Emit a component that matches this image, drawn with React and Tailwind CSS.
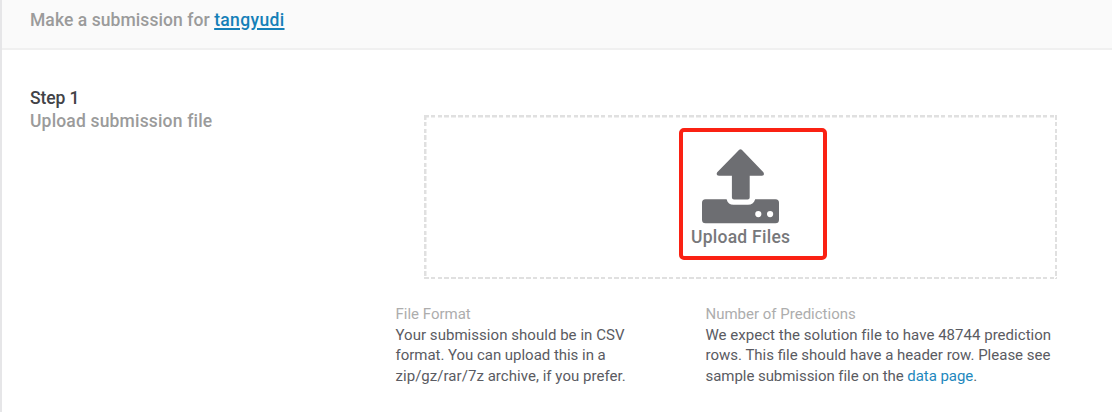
const dashedFrame =
  "bg-no-repeat bg-[image:repeating-linear-gradient(90deg,#e0e0e0_0_4.5px,transparent_4.5px_6.8px),repeating-linear-gradient(90deg,#e0e0e0_0_4.5px,transparent_4.5px_6.8px),repeating-linear-gradient(180deg,#e0e0e0_0_4.5px,transparent_4.5px_6.8px),repeating-linear-gradient(180deg,#e0e0e0_0_4.5px,transparent_4.5px_6.8px)] bg-[position:left_top,left_bottom,left_top,right_top] bg-[size:100%_2.5px,100%_2.5px,2.5px_100%,2.5px_100%]";

function UploadIcon() {
  return (
    <svg className="ml-[11px] block shrink-0" width="77" height="75" viewBox="0 0 77 75" fill="#6d6e72">
      <path d="M37.2 .8Q38.5 -.4 39.8 .8L61.4 23.3Q63 26.5 60 26.8H47.7V48.5Q47.7 50.6 45.6 50.6H32Q29.9 50.6 29.9 48.5V26.8H17Q13.5 26.5 15.2 23.3Z" />
      <path
        fillRule="evenodd"
        d="M3.5 50.2H24.6C25.5 53.8 28 55.8 31.5 55.8H46C49.5 55.8 52 53.8 53.2 50.2H73.5Q77 50.2 77 53.7V70.7Q77 74.2 73.5 74.2H3.5Q0 74.2 0 70.7V53.7Q0 50.2 3.5 50.2ZM56.3 62a3.1 3.1 0 1 0 0 6.2a3.1 3.1 0 1 0 0-6.2ZM68.1 62a3.1 3.1 0 1 0 0 6.2a3.1 3.1 0 1 0 0-6.2Z"
      />
    </svg>
  );
}

function Line({ className = "", children }) {
  return <span className={`block w-max ${className}`}>{children}</span>;
}

export default function App() {
  return (
    <div className="h-[412px] w-[1112px] overflow-hidden border-l-2 border-[#e6e6e8] bg-white font-['Roboto','Liberation_Sans',sans-serif]">
      <header className="h-[50px] border-b-2 border-[#f0f0f0] bg-[#fafafa] pl-7 pt-2 text-[17.5px] font-medium leading-[24px] text-[#9b9b9b]">
        <span className="tracking-[0.07px]">Make a submission for </span>
        <a href="#" className="tracking-[0.35px] text-[#1580b8] underline decoration-[1.5px] underline-offset-[1.5px]">tangyudi</a>
      </header>
      <main className="flex pl-7">
        <section className="w-[366px] shrink-0 pt-[37px] text-[17.5px] font-medium leading-[23px]">
          <Line className="tracking-[-0.1px] text-[#424347]">Step 1</Line>
          <Line className="tracking-[0.17px] text-[#9b9b9b]">Upload submission file</Line>
        </section>
        <section className="pt-[65px]">
          <div className={`ml-[28px] h-[164px] w-[633px] pl-[255px] pt-[13px] ${dashedFrame}`}>
            <button className="flex h-[132px] w-[148px] flex-col items-start justify-start rounded-[5px] border-4 border-[#fa2113] pl-2 pt-[17px] text-left">
              <UploadIcon />
              <Line className="mt-[1px] text-[17.5px] font-medium leading-[24px] tracking-[0.25px] text-[#77787b]">Upload Files</Line>
            </button>
          </div>
          <div className="-ml-[0.5px] flex pt-[25px] text-[15px] leading-[20.7px] text-[#5a5b62]">
            <div className="w-[310px]">
              <Line className="text-[#adadad]">File Format</Line>
              <Line className="tracking-[0.04px]">Your submission should be in CSV</Line>
              <Line className="tracking-[-0.03px]">format. You can upload this in a</Line>
              <Line className="tracking-[0.04px]">zip/gz/rar/7z archive, if you prefer.</Line>
            </div>
            <div>
              <Line className="text-[#adadad]">Number of Predictions</Line>
              <Line className="tracking-[0.03px]">We expect the solution file to have 48744 prediction</Line>
              <Line>rows. This file should have a header row. Please see</Line>
              <Line className="tracking-[-0.05px]">
                sample submission file on the <a href="#" className="text-[#1e88bd]">data page</a>.
              </Line>
            </div>
          </div>
        </section>
      </main>
    </div>
  );
}
